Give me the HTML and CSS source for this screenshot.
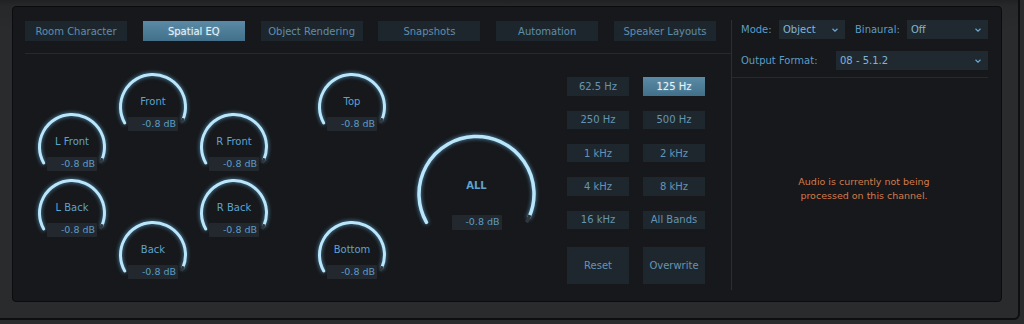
FILE: index.html
```html
<!DOCTYPE html>
<html>
<head>
<meta charset="utf-8">
<link rel="stylesheet" href="styles.css">
</head>
<body>
<div class="frame">
  <div class="panel">
    <div class="main">
      <div class="tabs">
        <div class="tab">Room Character</div>
        <div class="tab active">Spatial EQ</div>
        <div class="tab">Object Rendering</div>
        <div class="tab">Snapshots</div>
        <div class="tab">Automation</div>
        <div class="tab">Speaker Layouts</div>
      </div>
      <div class="stage">
        <div class="cluster">
          <div class="col side">
            <div class="knob">
              <svg width="70" height="56" viewBox="0 0 70 56"><path class="arc" d="M6.71 50 A32.5 32.5 0 1 1 64.8 46.96"/><path class="rest" d="M65.3 45.3 A32.5 32.5 0 0 1 63.29 50"/></svg>
              <div class="kc"><span class="label">L Front</span><span class="val">-0.8 dB</span></div>
            </div>
            <div class="knob">
              <svg width="70" height="56" viewBox="0 0 70 56"><path class="arc" d="M6.71 50 A32.5 32.5 0 1 1 64.8 46.96"/><path class="rest" d="M65.3 45.3 A32.5 32.5 0 0 1 63.29 50"/></svg>
              <div class="kc"><span class="label">L Back</span><span class="val">-0.8 dB</span></div>
            </div>
          </div>
          <div class="col mid">
            <div class="knob">
              <svg width="70" height="56" viewBox="0 0 70 56"><path class="arc" d="M6.71 50 A32.5 32.5 0 1 1 64.8 46.96"/><path class="rest" d="M65.3 45.3 A32.5 32.5 0 0 1 63.29 50"/></svg>
              <div class="kc"><span class="label">Front</span><span class="val">-0.8 dB</span></div>
            </div>
            <div class="knob">
              <svg width="70" height="56" viewBox="0 0 70 56"><path class="arc" d="M6.71 50 A32.5 32.5 0 1 1 64.8 46.96"/><path class="rest" d="M65.3 45.3 A32.5 32.5 0 0 1 63.29 50"/></svg>
              <div class="kc"><span class="label">Back</span><span class="val">-0.8 dB</span></div>
            </div>
          </div>
          <div class="col side">
            <div class="knob">
              <svg width="70" height="56" viewBox="0 0 70 56"><path class="arc" d="M6.71 50 A32.5 32.5 0 1 1 64.8 46.96"/><path class="rest" d="M65.3 45.3 A32.5 32.5 0 0 1 63.29 50"/></svg>
              <div class="kc"><span class="label">R Front</span><span class="val">-0.8 dB</span></div>
            </div>
            <div class="knob">
              <svg width="70" height="56" viewBox="0 0 70 56"><path class="arc" d="M6.71 50 A32.5 32.5 0 1 1 64.8 46.96"/><path class="rest" d="M65.3 45.3 A32.5 32.5 0 0 1 63.29 50"/></svg>
              <div class="kc"><span class="label">R Back</span><span class="val">-0.8 dB</span></div>
            </div>
          </div>
        </div>
        <div class="col tb">
          <div class="knob">
            <svg width="70" height="56" viewBox="0 0 70 56"><path class="arc" d="M6.71 50 A32.5 32.5 0 1 1 64.8 46.96"/><path class="rest" d="M65.3 45.3 A32.5 32.5 0 0 1 63.29 50"/></svg>
            <div class="kc"><span class="label">Top</span><span class="val">-0.8 dB</span></div>
          </div>
          <div class="knob">
            <svg width="70" height="56" viewBox="0 0 70 56"><path class="arc" d="M6.71 50 A32.5 32.5 0 1 1 64.8 46.96"/><path class="rest" d="M65.3 45.3 A32.5 32.5 0 0 1 63.29 50"/></svg>
            <div class="kc"><span class="label">Bottom</span><span class="val">-0.8 dB</span></div>
          </div>
        </div>
        <div class="allwrap">
          <div class="knob big">
            <svg width="119" height="92" viewBox="0 0 119 92"><path class="arc" d="M9.45 87.31 A57.5 57.5 0 1 1 112.03 82.39"/><path class="rest" d="M112.9 80.2 A57.5 57.5 0 0 1 109.55 87.31"/></svg>
            <div class="kc"><span class="label">ALL</span><span class="val">-0.8 dB</span></div>
          </div>
        </div>
        <div class="bands">
          <div class="btn">62.5 Hz</div>
          <div class="btn active">125 Hz</div>
          <div class="btn">250 Hz</div>
          <div class="btn">500 Hz</div>
          <div class="btn">1 kHz</div>
          <div class="btn">2 kHz</div>
          <div class="btn">4 kHz</div>
          <div class="btn">8 kHz</div>
          <div class="btn">16 kHz</div>
          <div class="btn">All Bands</div>
          <div class="btn tall">Reset</div>
          <div class="btn tall">Overwrite</div>
        </div>
      </div>
    </div>
    <div class="sidepanel">
      <div class="settings">
        <div class="row">
          <span class="lbl w-mode">Mode:</span>
          <div class="dd w-obj"><span>Object</span><svg width="6" height="4" viewBox="0 0 6 4"><path d="M0.5 0.8 L3 3.2 L5.5 0.8"/></svg></div>
          <span class="lbl w-bin">Binaural:</span>
          <div class="dd grow"><span>Off</span><svg width="6" height="4" viewBox="0 0 6 4"><path d="M0.5 0.8 L3 3.2 L5.5 0.8"/></svg></div>
        </div>
        <div class="row second">
          <span class="lbl w-out">Output Format:</span>
          <div class="dd grow"><span>08 - 5.1.2</span><svg width="6" height="4" viewBox="0 0 6 4"><path d="M0.5 0.8 L3 3.2 L5.5 0.8"/></svg></div>
        </div>
      </div>
      <div class="msg">Audio is currently not being<br>processed on this channel.</div>
    </div>
  </div>
</div>
</body>
</html>
```

FILE: styles.css
```css
* { box-sizing: border-box; }
html, body { margin: 0; padding: 0; }
body {
  background: #2a2b2d;
  width: 1024px;
  height: 324px;
  overflow: hidden;
  font-family: "DejaVu Sans", "Liberation Sans", sans-serif;
  font-size: 10px;
}
.frame {
  width: 1020px;
  height: 320px;
  padding: 6px 0 0 12px;
  background: linear-gradient(#202123 0px, #27282a 6px, #2a2b2d 30px);
  border-right: 2px solid #0e0f10;
  border-bottom: 2px solid #0e0f10;
  border-bottom-right-radius: 6px;
}
.panel {
  width: 990px;
  height: 296px;
  border: 1px solid #0b0c0d;
  border-radius: 4px;
  background: #16181b;
  display: flex;
}
.main {
  width: 719px;
  height: 270px;
  margin-top: 13px;
  border-right: 1px solid #24303a;
  padding: 1px 0 0 12px;
}
.tabs {
  display: flex;
  gap: 15.8px;
  padding-bottom: 12px;
  border-bottom: 1px solid #222b33;
}
.tab {
  width: 102px;
  height: 20px;
  background: #1e262d;
  color: #5f8eac;
  display: flex;
  align-items: center;
  justify-content: center;
  font-size: 10px;
}
.tab.active, .btn.active {
  background: linear-gradient(#5a8aa5, #42708b);
  color: #e6f3fa;
  text-shadow: 0 0 2px rgba(200, 235, 255, 0.45);
}
.stage {
  display: flex;
  align-items: flex-start;
  padding-left: 12px;
}
.cluster { display: flex; gap: 11px; }
.col { display: flex; flex-direction: column; }
.col.side { padding-top: 59px; gap: 7px; }
.col.mid { padding-top: 18.5px; gap: 89px; }
.col.tb { margin-left: 48px; padding-top: 18.5px; gap: 89.5px; }
.knob {
  display: grid;
  width: 70px;
  height: 59px;
}
.knob > * { grid-area: 1 / 1; }
.knob svg { overflow: visible; }
.arc {
  fill: none;
  stroke: #b9e6fb;
  stroke-width: 3;
  stroke-linecap: round;
  filter: drop-shadow(0 0 2px rgba(110, 195, 245, 0.75));
}
.rest {
  fill: none;
  stroke: #2f363c;
  stroke-width: 3;
}
.kc {
  display: flex;
  flex-direction: column;
  align-items: center;
  padding-top: 23px;
}
.label {
  font-size: 10px;
  line-height: 12px;
  color: #5ea3cf;
}
.val {
  margin-top: 9px;
  width: 50px;
  height: 14px;
  background: #22282e;
  border-radius: 1px;
  font-size: 9.5px;
  line-height: 14px;
  text-align: right;
  padding-right: 2px;
  color: #5d9cc5;
}
.allwrap { margin-left: 30px; padding-top: 81px; }
.knob.big { width: 119px; height: 95px; }
.big .arc { stroke-width: 3.5; }
.big .rest { stroke-width: 3.5; }
.big .kc { padding-top: 45px; }
.big .label { font-weight: bold; font-size: 10px; }
.big .val { margin-top: 23px; height: 14.5px; }
.bands {
  margin-left: 31px;
  padding-top: 23.3px;
  display: grid;
  grid-template-columns: 62px 62px;
  grid-auto-rows: 18.5px;
  column-gap: 14px;
  row-gap: 14.85px;
}
.btn {
  background: #1f272e;
  color: #6595b3;
  display: flex;
  align-items: center;
  justify-content: center;
  font-size: 10px;
}
.btn.tall { height: 36.5px; margin-top: 3.3px; }
.sidepanel {
  flex: 1;
  display: flex;
  flex-direction: column;
}
.settings {
  margin-top: 13px;
  margin-right: 13px;
  padding: 0 0 7px 9px;
  border-bottom: 1px solid #232b32;
}
.row { display: flex; height: 19px; align-items: center; }
.row.second { margin-top: 12px; }
.lbl { color: #5b9dc9; font-size: 10px; }
.w-mode { width: 38px; }
.w-bin { width: 52px; margin-left: 10px; }
.w-out { width: 95px; }
.dd {
  height: 19px;
  background: #212930;
  color: #80b5d8;
  font-size: 10px;
  display: flex;
  align-items: center;
  justify-content: space-between;
  padding: 0 7px 0 4px;
}
.dd svg path { fill: none; stroke: #6aa6cf; stroke-width: 1.2; }
.w-obj { width: 66px; }
.grow { flex: 1; }
.msg {
  flex: 1;
  display: flex;
  align-items: center;
  justify-content: center;
  text-align: center;
  padding-right: 5px;
  padding-bottom: 2px;
  color: #d27b4c;
  font-size: 9.5px;
  line-height: 13.5px;
}
```
